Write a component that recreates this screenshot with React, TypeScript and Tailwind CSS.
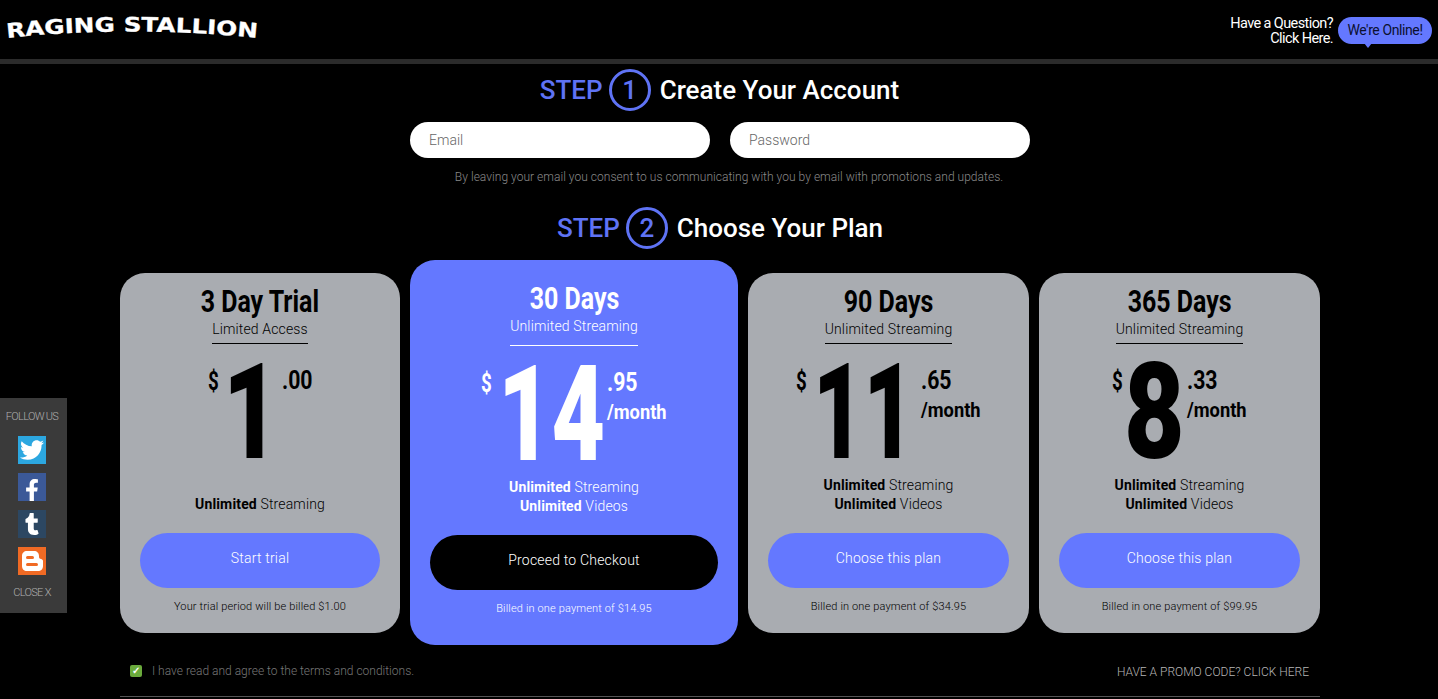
import { FaFacebookF, FaTumblr, FaTwitter } from "react-icons/fa";

const roboto = "font-['Roboto',sans-serif]";

function Logo() {
  return (
    <svg width="270" height="50" viewBox="0 0 270 50" className="block">
      <defs>
        <path id="logo-arc" d="M7 33 Q 125 20 259 33" fill="none" />
      </defs>
      <text fontFamily="DejaVu Sans" fontWeight="700" fontSize="20" fill="#fff" stroke="#fff" strokeWidth="0.3">
        <textPath href="#logo-arc" textLength="251" lengthAdjust="spacingAndGlyphs">
          RAGING STALLION
        </textPath>
      </text>
    </svg>
  );
}

function BloggerIcon() {
  return (
    <svg width="28" height="28" viewBox="0 0 28 28">
      <path d="M9 4h7c3 0 5 2 5 5v1c0 1 1 2 2 2s2 1 2 2v5c0 3-2 5-5 5H9c-3 0-5-2-5-5V9c0-3 2-5 5-5z" fill="#fff" />
      <rect x="8" y="9" width="8" height="3" rx="1.5" fill="#f06a24" />
      <rect x="8" y="16" width="12" height="3" rx="1.5" fill="#f06a24" />
    </svg>
  );
}

function Header() {
  return (
    <header className="h-[59px] flex items-center justify-between">
      <Logo />
      <div className="flex items-center pr-[6px] pt-[2px]">
        <p className="text-white text-right text-[14.5px] leading-[15px] tracking-[-0.6px] mr-[5px] mt-[1px]">
          Have a Question?
          <br />
          Click Here.
        </p>
        <div className="relative h-[27px] w-[94px] rounded-full bg-[#6478ff] text-[#0b1030] text-[14px] tracking-[-0.4px] flex items-center justify-center">
          We're Online!
          <span className="absolute left-[26px] top-[26px] w-0 h-0 border-x-[4px] border-x-transparent border-t-[5px] border-t-[#6478ff]" />
        </div>
      </div>
    </header>
  );
}

function Step({ n, title }: { n: number; title: string }) {
  return (
    <div className="flex items-center justify-center pr-[1px] text-[26px] font-medium leading-none">
      <span className="text-[#5f73f5]">STEP</span>
      <span className="w-[42px] h-[42px] ml-[6px] mr-[9px] rounded-full border-[3px] border-[#5f73f5] text-[#5f73f5] flex items-center justify-center">
        {n}
      </span>
      <span className="text-white">{title}</span>
    </div>
  );
}

type Plan = {
  title: string;
  sub: string;
  whole: string;
  wholeBox: string;
  centsBox: string;
  cents: string;
  month?: boolean;
  videos?: boolean;
  cta: string;
  note: string;
  featured?: boolean;
};

const plans: Plan[] = [
  { title: "3 Day Trial", sub: "Limited Access", whole: "1", wholeBox: "w-[59px] ml-[3px] scale-x-[.72]", centsBox: "w-[31px]", cents: ".00", cta: "Start trial", note: "Your trial period will be billed $1.00" },
  { title: "30 Days", sub: "Unlimited Streaming", whole: "14", wholeBox: "w-[109px] ml-[5px] scale-x-[.69]", centsBox: "w-[60px]", cents: ".95", month: true, videos: true, cta: "Proceed to Checkout", note: "Billed in one payment of $14.95", featured: true },
  { title: "90 Days", sub: "Unlimited Streaming", whole: "11", wholeBox: "w-[108px] ml-[5px] scale-x-[.65]", centsBox: "w-[60px]", cents: ".65", month: true, videos: true, cta: "Choose this plan", note: "Billed in one payment of $34.95" },
  { title: "365 Days", sub: "Unlimited Streaming", whole: "8", wholeBox: "w-[63px] scale-x-[.78]", centsBox: "w-[60px]", cents: ".33", month: true, videos: true, cta: "Choose this plan", note: "Billed in one payment of $99.95" },
];

function PlanCard({ plan }: { plan: Plan }) {
  const { featured } = plan;
  return (
    <div
      className={
        featured
          ? "w-[328px] h-[385px] rounded-[25px] bg-[#6478ff] text-white px-5 flex flex-col items-center"
          : "w-[281px] first:w-[280px] h-[360px] rounded-[25px] bg-[#a9acb1] text-black px-5 flex flex-col items-center"
      }
    >
      <h2 className={`font-bold text-[32px] leading-[36px] scale-x-[.78] whitespace-nowrap ${featured ? "mt-[20px]" : "mt-[10px]"}`}>
        {plan.title}
      </h2>
      <p
        className={`text-[14px] font-light tracking-[0.15px] leading-[18px] mt-[1px] border-b ${
          featured ? "border-white pb-[10px]" : "border-black pb-[5px]"
        }`}
      >
        {plan.sub}
      </p>
      <div className="font-bold flex justify-center items-start h-[109px] mt-[9px] w-full">
        <span className="w-[12px] text-[26px] leading-[32px] mt-[12px] scale-x-[.72] origin-left">$</span>
        <span className={`text-[134px] font-black leading-[120px] origin-left whitespace-nowrap ${plan.wholeBox}`}>
          {plan.whole}
        </span>
        <div className={`mt-[12px] ${plan.centsBox}`}>
          <div className="text-[25px] leading-[32px] scale-x-[.85] origin-left">{plan.cents}</div>
          {plan.month && <div className="text-[21px] leading-[30px] mt-[-2px] scale-x-[.87] origin-left whitespace-nowrap">/month</div>}
        </div>
      </div>
      <div className="h-[52px] flex flex-col justify-end text-[14px] font-light tracking-[0.15px] leading-[19px] text-center">
        <p>
          <b className="font-bold">Unlimited</b> Streaming
        </p>
        {plan.videos && (
          <p>
            <b className="font-bold">Unlimited</b> Videos
          </p>
        )}
      </div>
      <button
        className={`w-full h-[55px] rounded-full mt-[19px] text-white text-[14px] tracking-[0.2px] font-light pb-[4px] ${
          featured ? "bg-black" : "bg-[#6478ff]"
        }`}
      >
        {plan.cta}
      </button>
      <p className="text-[11px] font-light tracking-[0.15px] mt-[12px] leading-[14px]">{plan.note}</p>
    </div>
  );
}

function FollowPanel() {
  const icons = [
    { bg: "bg-[#2ca7e0]", icon: <FaTwitter size={24} /> },
    { bg: "bg-[#3b5998]", icon: <FaFacebookF size={22} className="mt-[5px]" /> },
    { bg: "bg-[#2c4762]", icon: <FaTumblr size={22} /> },
    { bg: "bg-[#f06a24]", icon: <BloggerIcon /> },
  ];
  return (
    <aside className="absolute left-0 top-[398px] w-[67px] h-[215px] pr-[3px] bg-[#3a3a3a] flex flex-col items-center text-[#b0b0b0] text-[11px] font-light">
      <span className="mt-[12px] leading-[14px] tracking-[-0.7px]">FOLLOW US</span>
      <div className="mt-[12px] flex flex-col gap-[9px]">
        {icons.map((item, i) => (
          <div key={i} className={`w-[28px] h-[28px] flex items-center justify-center text-white ${item.bg}`}>
            {item.icon}
          </div>
        ))}
      </div>
      <span className="mt-[11px] leading-[14px] tracking-[-0.7px]">CLOSE X</span>
    </aside>
  );
}

export default function App() {
  return (
    <div className={`${roboto} relative bg-black h-[699px] overflow-hidden`}>
      <Header />
      <div className="h-[5px] bg-[#2b2b2b]" />
      <main className="w-[1200px] ml-[120px]">
        <div className="mt-[5px]">
          <Step n={1} title="Create Your Account" />
        </div>
        <div className="flex justify-center gap-5 mt-[11px]">
          <input
            placeholder="Email"
            className="w-[300px] h-[36px] rounded-full bg-white pl-[19px] pr-5 text-[14px] font-light outline-none placeholder:text-[#666]"
          />
          <input
            placeholder="Password"
            className="w-[300px] h-[36px] rounded-full bg-white pl-[19px] pr-5 text-[14px] font-light outline-none placeholder:text-[#666]"
          />
        </div>
        <p className="text-center text-[12px] font-light text-[#8a8a8a] tracking-[0.03px] leading-[14px] mt-[12px] ml-[18px]">
          By leaving your email you consent to us communicating with you by email with promotions and updates.
        </p>
        <div className="mt-[23px] ml-[1px]">
          <Step n={2} title="Choose Your Plan" />
        </div>
        <div className="flex items-center gap-[10px] mt-[11px]">
          {plans.map((plan) => (
            <PlanCard key={plan.title} plan={plan} />
          ))}
        </div>
        <div className="flex items-center justify-between h-[52px] pl-[10px] pr-[11px] border-b border-[#555]">
          <label className="flex items-center text-[12px] font-light text-[#777]">
            <span className="w-[12px] h-[12px] rounded-[2px] bg-[#6aaa3c] text-white text-[10px] font-bold leading-none flex items-center justify-center mr-[10px]">
              ✓
            </span>
            <span className="mt-[1px]">I have read and agree to the terms and conditions.</span>
          </label>
          <span className="mt-[3px] text-[12px] font-light text-[#b5b5b5]">HAVE A PROMO CODE? CLICK HERE</span>
        </div>
      </main>
      <FollowPanel />
    </div>
  );
}
